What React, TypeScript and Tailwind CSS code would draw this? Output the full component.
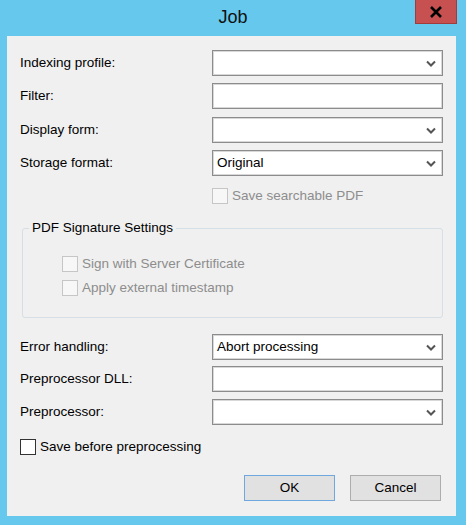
import React from 'react'

const font = { fontFamily: '"Liberation Sans", Arial, sans-serif' }

function Chevron() {
  return (
    <svg width="10" height="7" viewBox="0 0 10 7" className="shrink-0">
      <path d="M1 1.5 L5 5.5 L9 1.5" fill="none" stroke="#555" strokeWidth="2" />
    </svg>
  )
}

function Combo({ value }: { value?: string }) {
  return (
    <div className="w-[231px] h-[26px] bg-white border border-[#8c8c8c] shadow-[inset_0_0_0_1px_#d8d8d8] flex items-center pl-[4px] pr-[6px]">
      <span className="flex-1 text-[13.5px] text-black leading-none">{value}</span>
      <Chevron />
    </div>
  )
}

function TextBox() {
  return <div className="w-[231px] h-[26px] bg-white border border-[#8c8c8c] shadow-[inset_0_0_0_1px_#d8d8d8]" />
}

function Row({ label, children, className = '' }: { label: string; children: React.ReactNode; className?: string }) {
  return (
    <div className={`flex items-center h-[26px] ${className}`}>
      <span className="w-[192px] text-[13.5px] text-black leading-none">{label}</span>
      {children}
    </div>
  )
}

function Check({ label, disabled, className = '' }: { label: string; disabled?: boolean; className?: string }) {
  return (
    <div className={`flex items-center h-[16px] ${className}`}>
      <span className={`w-[16px] h-[16px] shrink-0 border ${disabled ? 'border-[#c6c6c6] bg-[#f7f7f7]' : 'border-[#333] bg-white'}`} />
      <span className={`ml-[4px] text-[13.5px] leading-none ${disabled ? 'text-[#8d8d8d]' : 'text-black'}`}>{label}</span>
    </div>
  )
}

export default function App() {
  return (
    <div className="w-[466px] h-[525px] bg-[#65c8ec] flex flex-col" style={font}>
      <div className="relative h-[36px] shrink-0 flex items-center justify-center">
        <span className="text-[18px] text-[#111] leading-none -mt-[2px]">Job</span>
        <div className="absolute right-[9px] top-0 w-[42px] h-[24px] bg-[#c75050] border border-t-0 border-[#a13c3c] flex items-center justify-center">
          <svg width="14" height="12" viewBox="0 0 14 12">
            <path d="M2 1 L12 11 M12 1 L2 11" stroke="#000" strokeWidth="2.6" />
          </svg>
        </div>
      </div>
      <div className="mx-[7px] mr-[10px] h-[480px] bg-[#f0f0f0] px-[13px] pt-[14px] flex flex-col">
        <Row label="Indexing profile:"><Combo /></Row>
        <Row label="Filter:" className="mt-[7px]"><TextBox /></Row>
        <Row label="Display form:" className="mt-[8px]"><Combo /></Row>
        <Row label="Storage format:" className="mt-[7px]"><Combo value="Original" /></Row>
        <Check label="Save searchable PDF" disabled className="ml-[192px] mt-[12px]" />

        <fieldset className="mt-[16px] ml-[2px] h-[98px] border border-[#d5dfe5] rounded-[3px]">
          <legend className="ml-[6px] px-[3px] text-[13.5px] text-black leading-[16px]">PDF Signature Settings</legend>
          <div className="pl-[39px] pt-[20px] flex flex-col gap-[8px]">
            <Check label="Sign with Server Certificate" disabled />
            <Check label="Apply external timestamp" disabled />
          </div>
        </fieldset>

        <Row label="Error handling:" className="mt-[16px]"><Combo value="Abort processing" /></Row>
        <Row label="Preprocessor DLL:" className="mt-[6px]"><TextBox /></Row>
        <Row label="Preprocessor:" className="mt-[7px]"><Combo /></Row>
        <Check label="Save before preprocessing" className="mt-[14px]" />

        <div className="flex justify-end gap-[15px] mt-[20px] mr-[2px]">
          <button className="w-[91px] h-[26px] bg-[#e1e1e1] border border-[#6fa8dc] text-[13.5px] text-black">OK</button>
          <button className="w-[91px] h-[26px] bg-[#e1e1e1] border border-[#adadad] text-[13.5px] text-black">Cancel</button>
        </div>
      </div>
    </div>
  )
}
